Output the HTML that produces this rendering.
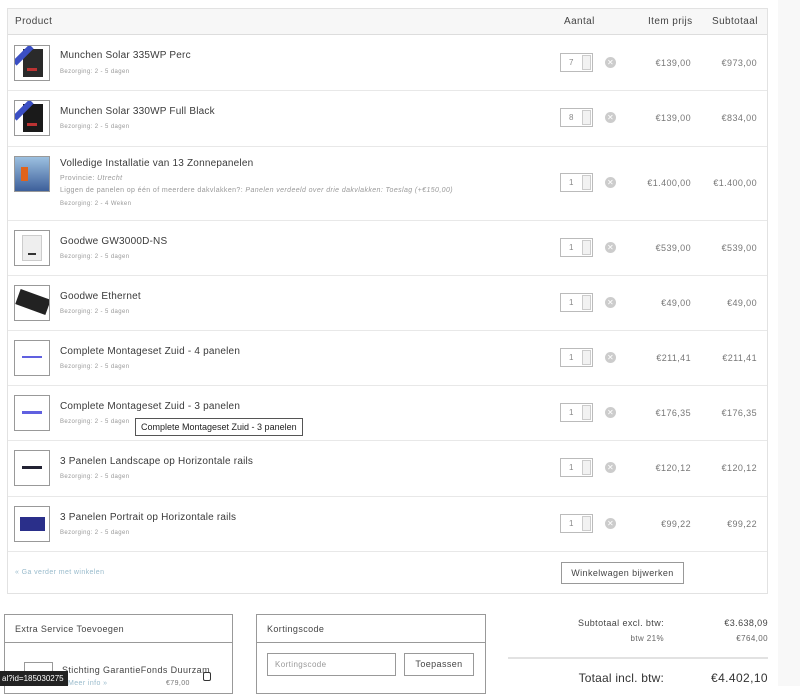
<!DOCTYPE html>
<html><head><meta charset="utf-8"><style>
*{margin:0;padding:0;box-sizing:border-box}
body{width:800px;height:686px;background:#fff;font-family:"Liberation Sans",sans-serif;color:#444;position:relative;overflow:hidden;font-size:10px;letter-spacing:.4px}
.a{position:absolute}
.side{left:778px;top:0;width:22px;height:686px;background:#f8f8f8}
.tbl{left:7px;top:8px;width:761px;height:586px;border:1px solid #e2e2e2}
.hdr{left:8px;top:9px;width:759px;height:26px;background:#f7f7f7;border-bottom:1px solid #ddd}
.line{left:8px;width:759px;height:1px;background:#e8e8e8}
.th{font-size:10px;color:#444;top:16px}
.thumb{left:14px;width:36px;height:36px;border:1px solid #999;background:#fff;overflow:hidden}
.t{left:60px;font-size:10px;color:#3a3a3a;letter-spacing:.2px}
.s{left:60px;font-size:6px;color:#999}
.q{left:560px;width:33px;height:19px;border:1px solid #bbb;background:#fff}
.q span{position:absolute;left:8px;top:4px;font-size:8px;color:#888}
.q i{position:absolute;left:21px;top:1px;width:9px;height:15px;border:1px solid #ccc;background:#f2f2f2}
.x{left:605px;width:11px;height:11px;border-radius:50%;background:#ccc;color:#fff;font-size:8px;line-height:11px;text-align:center;font-style:normal}
.p{font-size:9px;color:#777;text-align:right}
.box{border:1px solid #999;background:#fff}
</style></head><body>
<div class="a side"></div>
<div class="a tbl"></div>
<div class="a hdr"></div>
<div class="a th" style="left:15px">Product</div>
<div class="a th" style="left:564px">Aantal</div>
<div class="a th" style="left:648px">Item prijs</div>
<div class="a th" style="left:712px">Subtotaal</div>

<div class="a line" style="top:90px"></div>
<div class="a line" style="top:146px"></div>
<div class="a line" style="top:220px"></div>
<div class="a line" style="top:275px"></div>
<div class="a line" style="top:330px"></div>
<div class="a line" style="top:385px"></div>
<div class="a line" style="top:440px"></div>
<div class="a line" style="top:496px"></div>
<div class="a line" style="top:551px"></div>

<div class="a thumb" style="top:45px"><div class="a" style="left:8px;top:3px;width:20px;height:28px;background:#2a2a2a"></div><div class="a" style="left:-4px;top:6px;width:24px;height:6px;background:#3b4fc4;transform:rotate(-45deg)"></div><div class="a" style="left:12px;top:22px;width:10px;height:3px;background:#b33"></div></div>
<div class="a t" style="top:50px">Munchen Solar 335WP Perc</div>
<div class="a s" style="top:69px">Bezorging: 2 - 5 dagen</div>
<div class="a q" style="top:53px"><span>7</span><i></i></div><div class="a x" style="top:57px">✕</div>
<div class="a p" style="left:620px;width:71px;top:58px">€139,00</div>
<div class="a p" style="left:690px;width:67px;top:58px">€973,00</div>

<div class="a thumb" style="top:100px"><div class="a" style="left:8px;top:3px;width:20px;height:28px;background:#1a1a1a"></div><div class="a" style="left:-4px;top:6px;width:24px;height:6px;background:#3b4fc4;transform:rotate(-45deg)"></div><div class="a" style="left:12px;top:22px;width:10px;height:3px;background:#b33"></div></div>
<div class="a t" style="top:106px">Munchen Solar 330WP Full Black</div>
<div class="a s" style="top:124px">Bezorging: 2 - 5 dagen</div>
<div class="a q" style="top:108px"><span>8</span><i></i></div><div class="a x" style="top:112px">✕</div>
<div class="a p" style="left:620px;width:71px;top:113px">€139,00</div>
<div class="a p" style="left:690px;width:67px;top:113px">€834,00</div>

<div class="a thumb" style="top:156px;background:linear-gradient(#9cc0e0,#3d5f9a)"><div class="a" style="left:6px;top:10px;width:7px;height:14px;background:#e0631a"></div></div>
<div class="a t" style="top:158px">Volledige Installatie van 13 Zonnepanelen</div>
<div class="a s" style="top:175px;font-size:7px">Provincie: <i>Utrecht</i></div>
<div class="a s" style="top:187px;font-size:7px">Liggen de panelen op één of meerdere dakvlakken?: <i>Panelen verdeeld over drie dakvlakken: Toeslag (+€150,00)</i></div>
<div class="a s" style="top:201px">Bezorging: 2 - 4 Weken</div>
<div class="a q" style="top:173px"><span>1</span><i></i></div><div class="a x" style="top:177px">✕</div>
<div class="a p" style="left:620px;width:71px;top:178px">€1.400,00</div>
<div class="a p" style="left:690px;width:67px;top:178px">€1.400,00</div>

<div class="a thumb" style="top:230px"><div class="a" style="left:7px;top:4px;width:20px;height:26px;background:#eee;border:1px solid #ccc"></div><div class="a" style="left:13px;top:22px;width:8px;height:2px;background:#333"></div></div>
<div class="a t" style="top:236px">Goodwe GW3000D-NS</div>
<div class="a s" style="top:254px">Bezorging: 2 - 5 dagen</div>
<div class="a q" style="top:238px"><span>1</span><i></i></div><div class="a x" style="top:242px">✕</div>
<div class="a p" style="left:620px;width:71px;top:243px">€539,00</div>
<div class="a p" style="left:690px;width:67px;top:243px">€539,00</div>

<div class="a thumb" style="top:285px"><div class="a" style="left:2px;top:8px;width:32px;height:16px;background:#222;transform:rotate(20deg)"></div></div>
<div class="a t" style="top:291px">Goodwe Ethernet</div>
<div class="a s" style="top:309px">Bezorging: 2 - 5 dagen</div>
<div class="a q" style="top:293px"><span>1</span><i></i></div><div class="a x" style="top:297px">✕</div>
<div class="a p" style="left:620px;width:71px;top:298px">€49,00</div>
<div class="a p" style="left:690px;width:67px;top:298px">€49,00</div>

<div class="a thumb" style="top:340px"><div class="a" style="left:7px;top:15px;width:20px;height:2px;background:#6060e0"></div></div>
<div class="a t" style="top:346px">Complete Montageset Zuid - 4 panelen</div>
<div class="a s" style="top:364px">Bezorging: 2 - 5 dagen</div>
<div class="a q" style="top:348px"><span>1</span><i></i></div><div class="a x" style="top:352px">✕</div>
<div class="a p" style="left:620px;width:71px;top:353px">€211,41</div>
<div class="a p" style="left:690px;width:67px;top:353px">€211,41</div>

<div class="a thumb" style="top:395px"><div class="a" style="left:7px;top:15px;width:20px;height:3px;background:#6060e0"></div></div>
<div class="a t" style="top:401px">Complete Montageset Zuid - 3 panelen</div>
<div class="a s" style="top:419px">Bezorging: 2 - 5 dagen</div>
<div class="a q" style="top:403px"><span>1</span><i></i></div><div class="a x" style="top:407px">✕</div>
<div class="a p" style="left:620px;width:71px;top:408px">€176,35</div>
<div class="a p" style="left:690px;width:67px;top:408px">€176,35</div>
<div class="a" style="left:135px;top:418px;width:168px;height:18px;border:1px solid #555;background:#fff;font-size:9px;color:#222;padding:3px 5px;letter-spacing:0;white-space:nowrap">Complete Montageset Zuid - 3 panelen</div>

<div class="a thumb" style="top:450px"><div class="a" style="left:7px;top:15px;width:20px;height:3px;background:#223"></div></div>
<div class="a t" style="top:456px">3 Panelen Landscape op Horizontale rails</div>
<div class="a s" style="top:474px">Bezorging: 2 - 5 dagen</div>
<div class="a q" style="top:458px"><span>1</span><i></i></div><div class="a x" style="top:462px">✕</div>
<div class="a p" style="left:620px;width:71px;top:463px">€120,12</div>
<div class="a p" style="left:690px;width:67px;top:463px">€120,12</div>

<div class="a thumb" style="top:506px"><div class="a" style="left:5px;top:10px;width:25px;height:14px;background:#2a2f8a"></div></div>
<div class="a t" style="top:512px">3 Panelen Portrait op Horizontale rails</div>
<div class="a s" style="top:530px">Bezorging: 2 - 5 dagen</div>
<div class="a q" style="top:514px"><span>1</span><i></i></div><div class="a x" style="top:518px">✕</div>
<div class="a p" style="left:620px;width:71px;top:519px">€99,22</div>
<div class="a p" style="left:690px;width:67px;top:519px">€99,22</div>

<div class="a" style="left:15px;top:569px;font-size:7px;color:#9bc">« Ga verder met winkelen</div>
<div class="a box" style="left:561px;top:562px;width:123px;height:22px;font-size:9px;color:#444;text-align:center;line-height:20px">Winkelwagen bijwerken</div>

<div class="a box" style="left:4px;top:614px;width:229px;height:80px"></div>
<div class="a" style="left:5px;top:642px;width:227px;height:1px;background:#999"></div>
<div class="a" style="left:15px;top:624px;font-size:9px">Extra Service Toevoegen</div>
<div class="a box" style="left:24px;top:662px;width:29px;height:20px"></div>
<div class="a" style="left:62px;top:665px;font-size:9px">Stichting GarantieFonds Duurzam</div>
<div class="a" style="left:166px;top:680px;font-size:7px;color:#777">€79,00</div>
<div class="a" style="left:203px;top:672px;width:8px;height:9px;border:1px solid #333;border-radius:2px"></div>
<div class="a" style="left:68px;top:680px;font-size:7px;color:#9bc">Meer info »</div>
<div class="a" style="left:0;top:671px;width:68px;height:15px;background:#222;color:#fff;font-size:8px;line-height:15px;padding-left:2px;letter-spacing:0">al?id=185030275</div>

<div class="a box" style="left:256px;top:614px;width:230px;height:80px"></div>
<div class="a" style="left:257px;top:642px;width:228px;height:1px;background:#999"></div>
<div class="a" style="left:267px;top:624px;font-size:9px">Kortingscode</div>
<div class="a box" style="left:267px;top:653px;width:129px;height:23px;font-size:8px;color:#999;padding:6px 7px">Kortingscode</div>
<div class="a box" style="left:404px;top:653px;width:70px;height:23px;font-size:9px;text-align:center;line-height:21px">Toepassen</div>

<div class="a" style="left:560px;top:618px;width:104px;text-align:right;font-size:9px">Subtotaal excl. btw:</div>
<div class="a" style="left:690px;top:618px;width:78px;text-align:right;font-size:9px">€3.638,09</div>
<div class="a" style="left:560px;top:634px;width:104px;text-align:right;font-size:8px;color:#666">btw 21%</div>
<div class="a" style="left:690px;top:634px;width:78px;text-align:right;font-size:8px;color:#666">€764,00</div>
<div class="a" style="left:508px;top:657px;width:260px;height:2px;background:#e2e2e2"></div>
<div class="a" style="left:540px;top:671px;width:124px;text-align:right;font-size:12px;color:#333;letter-spacing:.2px">Totaal incl. btw:</div>
<div class="a" style="left:690px;top:671px;width:78px;text-align:right;font-size:12px;color:#333">€4.402,10</div>
</body></html>
